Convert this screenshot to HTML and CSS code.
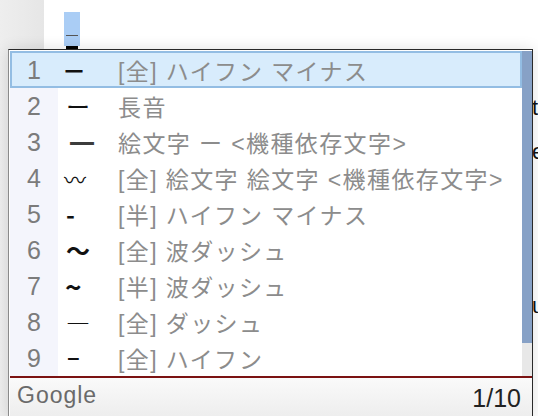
FILE: index.html
```html
<!DOCTYPE html>
<html>
<head>
    <title>変換候補</title>
    <meta charset="utf-8">
    <link rel="stylesheet" href="styles.css">
</head>
<body>
    <div class="desk">
        <div class="sidebar"></div>
        <div class="page">
            <div class="composing">
                <span class="caret-mark"></span>
                <span class="underline"></span>
            </div>
            <div class="edge-text">
                <p class="line-t">t</p>
                <p class="line-e">e</p>
                <p class="line-u">u</p>
            </div>
        </div>
    </div>

    <div class="popup">
        <div class="popup-body">
            <ul class="candidates">
                <li class="row selected"><span class="num">1</span><span class="cand short">－</span><span class="desc">[全] ハイフン マイナス</span></li>
                <li class="row"><span class="num">2</span><span class="cand">ー</span><span class="desc">長音</span></li>
                <li class="row"><span class="num">3</span><span class="cand heavy">━</span><span class="desc">絵文字 ー &lt;機種依存文字&gt;</span></li>
                <li class="row"><span class="num">4</span><span class="cand wavy">〰</span><span class="desc">[全] 絵文字 絵文字 &lt;機種依存文字&gt;</span></li>
                <li class="row"><span class="num">5</span><span class="cand bold">-</span><span class="desc">[半] ハイフン マイナス</span></li>
                <li class="row"><span class="num">6</span><span class="cand bold">〜</span><span class="desc">[全] 波ダッシュ</span></li>
                <li class="row"><span class="num">7</span><span class="cand tilde">~</span><span class="desc">[半] 波ダッシュ</span></li>
                <li class="row"><span class="num">8</span><span class="cand">―</span><span class="desc">[全] ダッシュ</span></li>
                <li class="row"><span class="num">9</span><span class="cand hyphen">‐</span><span class="desc">[全] ハイフン</span></li>
            </ul>
            <div class="scrollbar"><div class="thumb"></div></div>
        </div>
        <div class="footer">
            <span class="brand">Google</span>
            <span class="count">1/10</span>
        </div>
    </div>
</body>
</html>
```

FILE: styles.css
```css
html, body {
    margin: 0;
    width: 538px;
    height: 416px;
    overflow: hidden;
    font-family: "Liberation Sans", "Noto Sans CJK JP", sans-serif;
}
.desk {
    display: flex;
    height: 416px;
}
.sidebar {
    width: 44px;
    background: linear-gradient(to right, #eeeeee, #e6e6e6);
}
.page {
    flex: 1;
    display: flex;
    background: #fff;
}
.composing {
    margin: 12px 0 0 20px;
    width: 16px;
    height: 37px;
    display: flex;
    flex-direction: column;
}
.caret-mark {
    height: 34px;
    background: #aacdf5;
    position: relative;
}
.caret-mark::after {
    content: "";
    position: absolute;
    left: 2px;
    right: 2px;
    top: 23px;
    height: 1px;
    background: #555;
}
.underline {
    height: 3px;
    margin: 0 2px;
    background: #000;
}
.edge-text {
    margin-left: auto;
    width: 6px;
    font-size: 22px;
    color: #111;
}
.edge-text p {
    margin: 0;
    line-height: 24px;
}
.line-t {
    margin-top: 96px !important;
}
.line-e {
    margin-top: 20px !important;
}
.line-u {
    margin-top: 130px !important;
}

.popup {
    position: absolute;
    left: 8px;
    top: 49px;
    width: 525px;
    box-sizing: border-box;
    border: 1px solid #2a2a2a;
    border-left-color: #8a8a8a;
    padding: 1px 0 0 1px;
    background: #fff;
    box-shadow: 0 0 14px rgba(0, 0, 0, 0.12);
}
.popup-body {
    display: flex;
}
.candidates {
    flex: 1;
    margin: 0;
    padding: 0;
    list-style: none;
}
.row {
    display: grid;
    grid-template-columns: 48px 60px 1fr;
    grid-template-rows: 36px;
    height: 36px;
    align-items: center;
}
.num {
    height: 36px;
    line-height: 36px;
    text-align: center;
    background: #f4f5fc;
    font-size: 25px;
    color: #7b7b7b;
}
.cand {
    padding-left: 8px;
    font-family: "Noto Sans CJK JP", sans-serif;
    font-size: 24px;
    line-height: 36px;
    color: #111;
}
.cand.bold {
    font-weight: 700;
}
.cand.short {
    padding-left: 4px;
    font-weight: 700;
}
.cand.heavy {
    color: #3c3c3c;
    padding-left: 12px;
    font-weight: 700;
}
.cand.wavy {
    font-size: 22px;
    padding-left: 6px;
}
.cand.tilde {
    font-size: 28px;
    font-weight: 700;
    padding-left: 7px;
}
.cand.hyphen {
    font-family: "DejaVu Sans", sans-serif;
    transform: scaleX(1.7);
    transform-origin: 8px 50%;
}
.desc {
    font-family: "Liberation Sans", "Noto Sans CJK JP", sans-serif;
    font-size: 23px;
    letter-spacing: 1.4px;
    color: #8c8c8c;
    white-space: nowrap;
}
.selected {
    height: 37px;
    grid-template-rows: 37px;
    background: #d8ecfc;
    box-shadow: inset 0 0 0 2px #93bde3;
}
.selected .num {
    background: transparent;
}
.scrollbar {
    width: 10px;
    background: #e8e8e8;
}
.thumb {
    height: 292px;
    background: #87a1c6;
}
.footer {
    display: flex;
    justify-content: space-between;
    align-items: center;
    height: 40px;
    padding: 0 11px 0 7px;
    border-top: 2px solid #7b1212;
    background: linear-gradient(#fafafa, #ededed);
}
.brand {
    font-size: 23px;
    letter-spacing: 1px;
    color: #6a6a6a;
    margin-top: -6px;
}
.count {
    font-size: 25px;
    color: #222;
}
```
